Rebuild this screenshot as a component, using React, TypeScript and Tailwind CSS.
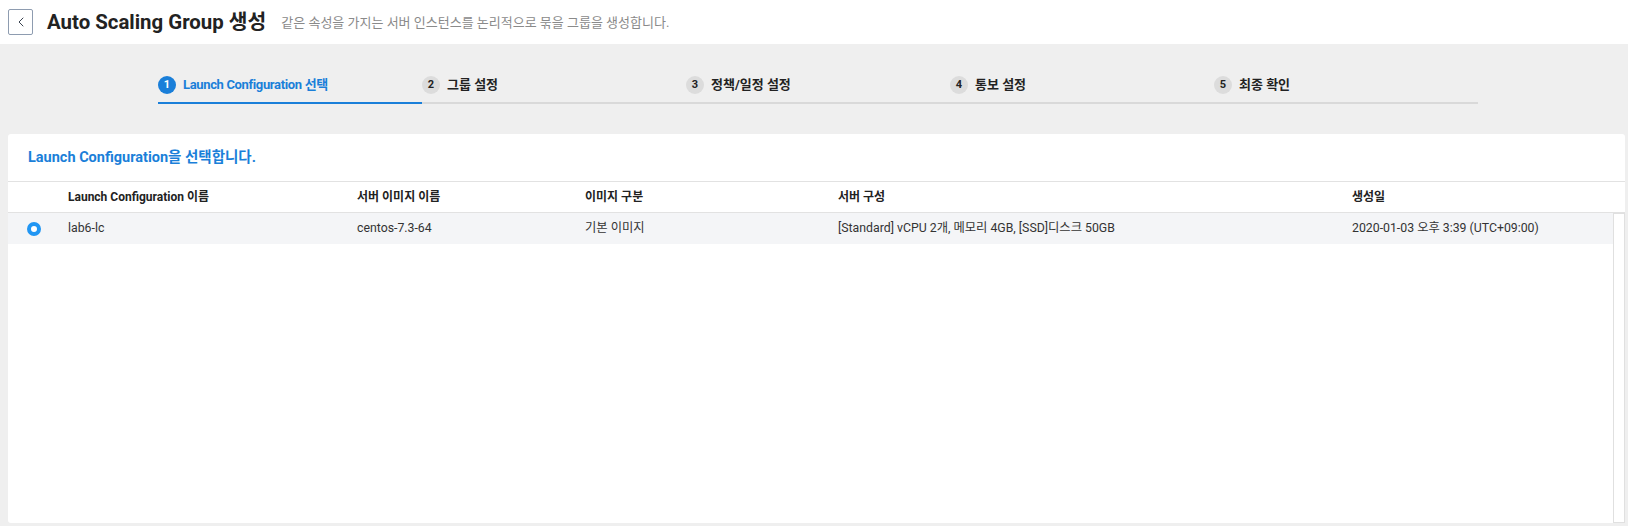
import { ChevronLeft } from "lucide-react";

const steps = ["Launch Configuration 선택", "그룹 설정", "정책/일정 설정", "통보 설정", "최종 확인"];

const columns = [
  { label: "Launch Configuration 이름", width: "w-[289px]" },
  { label: "서버 이미지 이름", width: "w-[228px]" },
  { label: "이미지 구분", width: "w-[253px]" },
  { label: "서버 구성", width: "w-[514px]" },
  { label: "생성일", width: "flex-1" },
];

const row = [
  "lab6-lc",
  "centos-7.3-64",
  "기본 이미지",
  "[Standard] vCPU 2개, 메모리 4GB, [SSD]디스크 50GB",
  "2020-01-03 오후 3:39 (UTC+09:00)",
];

export default function App() {
  return (
    <div className="w-[1628px] h-[526px] bg-[#efefef] font-['Roboto','Noto_Sans_CJK_KR',sans-serif] overflow-hidden">
      {/* Header */}
      <header className="h-[44px] bg-white flex items-center">
        <button className="ml-[8px] w-[25px] h-[26px] border border-[#8e9cb0] rounded-[2px] flex items-center justify-center text-[#3a4350]">
          <ChevronLeft size={16} strokeWidth={1.5} />
        </button>
        <h1 className="ml-[14px] text-[20.4px] font-bold text-[#222]">Auto Scaling Group 생성</h1>
        <p className="ml-[15px] text-[13px] text-[#8a8a8a] mt-[2px]">
          같은 속성을 가지는 서버 인스턴스를 논리적으로 묶을 그룹을 생성합니다.
        </p>
      </header>

      {/* Stepper */}
      <div className="h-[90px] pl-[158px] pt-[32px] flex">
        {steps.map((step, i) => (
          <div key={i} className="w-[264px] flex flex-col">
            <div className="h-[18px] flex items-center gap-[7px]">
              <span
                className={
                  i === 0
                    ? "w-[18px] h-[18px] rounded-full bg-[#1a7fd9] text-white text-[11px] font-bold flex items-center justify-center"
                    : "w-[18px] h-[18px] rounded-full bg-[#dcdcdc] text-[#222] text-[11px] font-bold flex items-center justify-center"
                }
              >
                {i + 1}
              </span>
              <span
                className={
                  i === 0
                    ? "text-[13px] font-bold text-[#1a7fd9] tracking-[-0.35px]"
                    : "text-[13px] font-bold text-[#222]"
                }
              >
                {step}
              </span>
            </div>
            <div className={i === 0 ? "mt-[8px] h-[2px] bg-[#1a7fd9]" : "mt-[8px] h-[2px] bg-[#d9d9d9]"}></div>
          </div>
        ))}
      </div>

      {/* Card */}
      <div className="ml-[8px] w-[1617px] h-[389px] bg-white rounded-[3px] flex flex-col">
        <div className="h-[47px] flex items-center pl-[20px] text-[14.5px] font-bold text-[#1a7fd9]">
          Launch Configuration을 선택합니다.
        </div>

        {/* Table header */}
        <div className="h-[32px] flex items-center border-t border-b border-[#e2e2e2]">
          <div className="w-[60px]"></div>
          {columns.map((col) => (
            <div key={col.label} className={`${col.width} text-[12px] font-bold text-[#222]`}>
              {col.label}
            </div>
          ))}
        </div>

        {/* Table body */}
        <div className="flex-1 flex">
          <div className="flex-1 flex flex-col">
            <div className="h-[31px] bg-[#f4f5f7] flex items-center">
              <div className="w-[60px] pl-[19px]">
                <span className="block w-[14px] h-[14px] rounded-full border-[4px] border-[#2196f3] bg-white"></span>
              </div>
              {row.map((cell, i) => (
                <div key={i} className={`${columns[i].width} text-[12.3px] text-[#333]`}>
                  {cell}
                </div>
              ))}
            </div>
          </div>
          <div className="w-[12px] border border-[#e0e0e0] bg-white"></div>
        </div>
      </div>
    </div>
  );
}
